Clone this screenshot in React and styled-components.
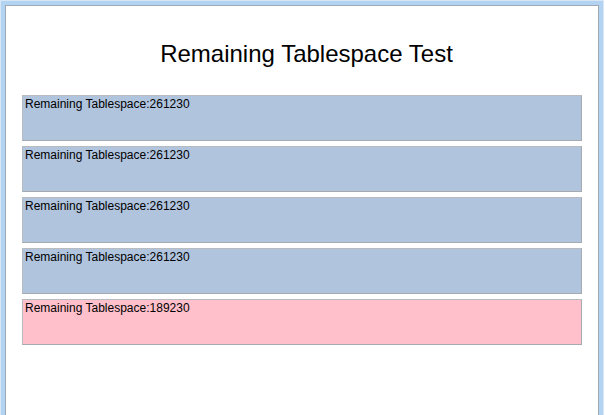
import React from "react";
import styled, { createGlobalStyle } from "styled-components";

const Global = createGlobalStyle`
  html, body { margin: 0; padding: 0; background: #ffffff; overflow: hidden; }
  body { font-family: "Liberation Sans", Arial, sans-serif; }
`;

const Window = styled.div`
  box-sizing: border-box;
  width: 604px;
  height: 415px;
  border: 1px solid #d9e7f5;
  border-bottom: none;
  background: #b2d3f2;
  padding: 4px 4px 0 4px;
  overflow: hidden;
`;

const Client = styled.div`
  box-sizing: border-box;
  height: 100%;
  background: #ffffff;
  border: 1px solid #a3a9b0;
  border-bottom: none;
  padding: 36px 16px 0 16px;
  display: flex;
  flex-direction: column;
`;

const Title = styled.h1`
  margin: 0 0 29px 0;
  padding-left: 9px;
  font-family: "Liberation Sans", Arial, sans-serif;
  font-weight: normal;
  font-size: 24px;
  line-height: 24px;
  color: #000000;
  text-align: center;
`;

const List = styled.div`
  display: flex;
  flex-direction: column;
  gap: 5px;
`;

const Row = styled.div`
  box-sizing: border-box;
  height: 46px;
  border: 1px solid #b8bcc0;
  border-right-color: #a6abb0;
  border-bottom-color: #a6abb0;
  background: ${(p) => (p.$low ? "#ffc0cb" : "#b0c4de")};
  padding: 1px 2px;
  font-family: "Liberation Sans", Arial, sans-serif;
  font-size: 12px;
  line-height: 14px;
  color: #000000;
`;

const rows = [
  { value: 261230 },
  { value: 261230 },
  { value: 261230 },
  { value: 261230 },
  { value: 189230, low: true },
];

export default function App() {
  return (
    <>
      <Global />
      <Window>
        <Client>
          <Title>Remaining Tablespace Test</Title>
          <List>
            {rows.map((r, i) => (
              <Row key={i} $low={r.low}>
                Remaining Tablespace:{r.value}
              </Row>
            ))}
          </List>
        </Client>
      </Window>
    </>
  );
}
